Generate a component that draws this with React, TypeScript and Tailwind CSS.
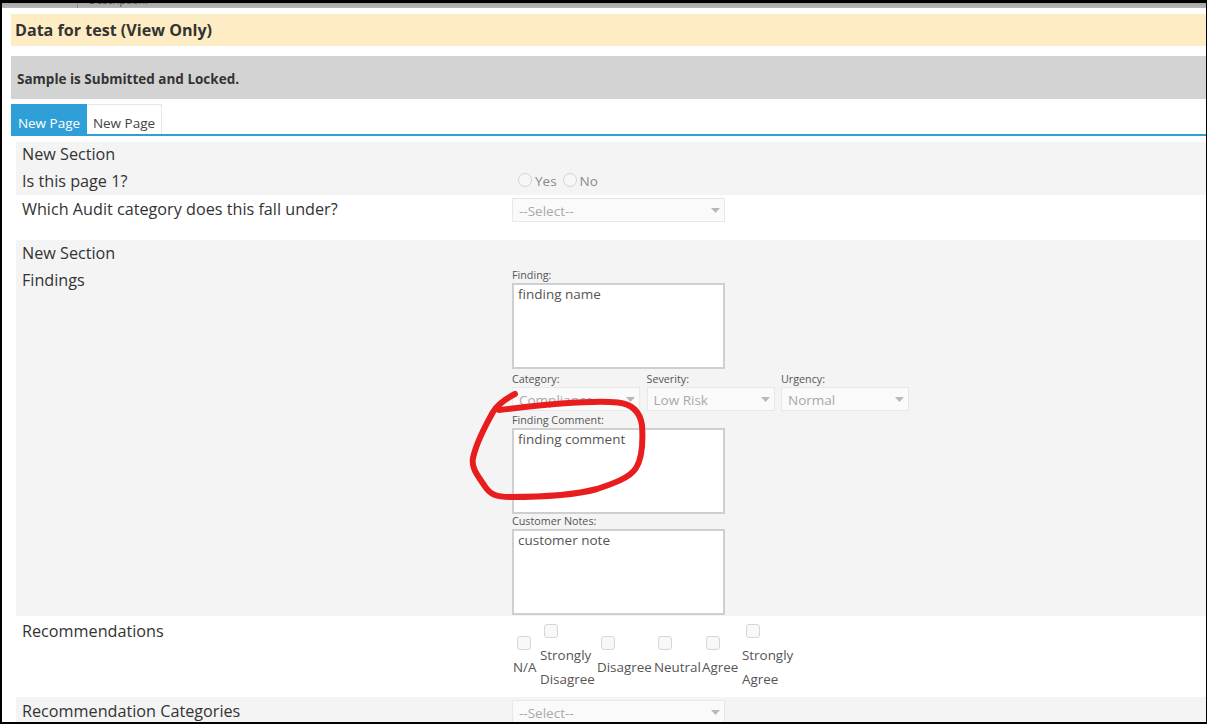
const font = "font-['Open_Sans','Noto_Sans',sans-serif]";

const Caret = () => (
  <svg width="9" height="5" viewBox="0 0 9 5" className="shrink-0">
    <path d="M0 0h9L4.5 5z" fill="#b8b8b8" />
  </svg>
);

const Select = ({ value, className }: { value: string; className: string }) => (
  <div className={`flex h-[24px] items-center justify-between border border-[#e8e8e8] bg-[#fafafa] pl-[6px] pr-[4px] text-[13.5px] text-[#a9a9a9] ${className}`}>
    <span className="pt-[2px]">{value}</span>
    <Caret />
  </div>
);

const Note = ({ label, value }: { label: string; value: string }) => (
  <div className="flex w-[212.5px] flex-col">
    <label className="h-[14px] text-[10.75px] leading-[12px] text-[#555]">{label}</label>
    <textarea
      readOnly
      defaultValue={value}
      className="h-[86px] w-[212.5px] resize-none overflow-hidden border-2 border-[#cfcfcf] bg-white px-[4px] text-[13.5px] leading-[18px] text-[#555] outline-none"
    />
  </div>
);

const Radio = ({ label }: { label: string }) => (
  <span className="flex items-center">
    <span className="h-[14px] w-[14px] rounded-full border border-[#d4d4d4] bg-[#f7f7f7]" />
    <span className="ml-[3px] mt-[2px] text-[13.5px] text-[#8a8a8a]">{label}</span>
  </span>
);

const Check = ({ lines, w }: { lines: string[]; w: string }) => (
  <div className={`flex flex-col ${w}`}>
    <span className="ml-1 h-[14px] w-[14px] rounded-[3px] border border-[#d6d6d6] bg-[#f8f8f8]" />
    <div className="mt-[5px] text-[13.4px] leading-[24px] whitespace-nowrap text-[#555]">
      {lines.map((l) => (
        <div key={l}>{l}</div>
      ))}
    </div>
  </div>
);

const Label = ({ children, h }: { children: string; h: string }) => (
  <div className={`text-[16.2px] text-[#333] ${h}`}>{children}</div>
);

export default function App() {
  return (
    <div className={`relative h-[724px] w-[1207px] overflow-hidden bg-black pt-[3px] pb-[2px] pl-[2px] pr-px ${font}`}>
      <div className="flex h-full flex-col bg-white">
        {/* window behind, almost scrolled off */}
        <div className="relative h-[5px] shrink-0 overflow-hidden bg-gradient-to-b from-[#a4a4a4] to-[#b8b8b8]">
          <div className="absolute top-0 bottom-0 left-[75px] w-px bg-[#8f8f8f]" />
          <span className="absolute top-[-10px] left-[87px] text-[10.5px] text-[#555]">Description:</span>
        </div>

        <div className="ml-[9px] mt-[6px] flex h-[32px] shrink-0 items-center bg-[#feecc4] pl-[4px] text-[16.1px] font-bold text-[#333]">
          Data for test (View Only)
        </div>
        <div className="ml-[9px] mt-[10px] flex h-[43px] shrink-0 items-center bg-[#d3d3d3] pl-[6px] pt-[3px] text-[13.5px] font-bold text-[#333]">
          Sample is Submitted and Locked.
        </div>

        <div className="ml-[9px] mt-[5px] flex h-[32px] shrink-0 border-b-2 border-[#2f9fd8] text-[13.5px]">
          <div className="flex w-[76px] items-center justify-center bg-[#2f9fd8] pt-[8px] text-white">New Page</div>
          <div className="flex w-[75px] items-center justify-center border-t border-r border-[#e6e6e6] pt-[8px] text-[#444]">New Page</div>
        </div>

        <div className="ml-[14px] mt-[6px] h-[53px] shrink-0 bg-[#f4f4f4] pl-[6px]">
          <Label h="leading-[24px]">New Section</Label>
          <div className="flex h-[29px]">
            <div className="w-[490px]">
              <Label h="leading-[31px]">Is this page 1?</Label>
            </div>
            <div className="flex gap-[6px] pb-px pl-[6px]">
              <Radio label="Yes" />
              <Radio label="No" />
            </div>
          </div>
        </div>

        <div className="ml-[14px] flex h-[45px] shrink-0 pl-[6px]">
          <div className="w-[490px] pt-px">
            <Label h="leading-[26px]">Which Audit category does this fall under?</Label>
          </div>
          <Select value="--Select--" className="mt-[3px] w-[212.5px]" />
        </div>

        <div className="ml-[14px] h-[376px] shrink-0 bg-[#f4f4f4] pl-[6px]">
          <Label h="leading-[26px]">New Section</Label>
          <div className="flex">
            <div className="w-[490px]">
              <Label h="leading-[28px]">Findings</Label>
            </div>
            <div className="flex flex-col pt-[3px]">
              <Note label="Finding:" value="finding name" />
              <div className="mt-[4px] flex gap-[6.5px]">
                {[
                  ["Category:", "Compliance"],
                  ["Severity:", "Low Risk"],
                  ["Urgency:", "Normal"],
                ].map(([label, value]) => (
                  <div key={label} className="flex w-[128px] flex-col">
                    <span className="h-[14px] text-[10.75px] leading-[12px] text-[#555]">{label}</span>
                    <Select value={value} className="w-[128px]" />
                  </div>
                ))}
              </div>
              <div className="mt-[3px] flex flex-col gap-px">
                <Note label="Finding Comment:" value="finding comment" />
                <Note label="Customer Notes:" value="customer note" />
              </div>
            </div>
          </div>
        </div>

        <div className="ml-[14px] flex h-[81px] shrink-0 pl-[6px]">
          <div className="w-[491px] pt-[2px]">
            <Label h="leading-[26px]">Recommendations</Label>
          </div>
          <div className="flex items-center gap-[2px] pt-[2px]">
            <Check lines={["N/A"]} w="w-[25px]" />
            <Check lines={["Strongly", "Disagree"]} w="w-[55px]" />
            <Check lines={["Disagree"]} w="w-[55px]" />
            <Check lines={["Neutral"]} w="w-[46px]" />
            <Check lines={["Agree"]} w="w-[38px]" />
            <Check lines={["Strongly", "Agree"]} w="w-[52px]" />
          </div>
        </div>

        <div className="ml-[14px] flex min-h-0 flex-1 overflow-hidden bg-[#f4f4f4] pl-[6px]">
          <div className="w-[490px] pt-px">
            <Label h="leading-[26px]">Recommendation Categories</Label>
          </div>
          <Select value="--Select--" className="mt-[3px] w-[212.5px] shrink-0" />
        </div>
      </div>

      {/* red marker scribble over the finding comment */}
      <svg className="pointer-events-none absolute top-0 left-0" width="1207" height="724" viewBox="0 0 1207 724" fill="none">
        <path
          d="M515 394 C505 399 498 404 493 412 C484 428 476 444 473 458 C471 468 478 476 484 485 C490 495 497 497 510 497 C540 497 575 495 597 489 C612 484 630 478 636 468 C643 457 643 440 642 425 C640 412 632 404 618 402.5 C590 400 540 405 499 410"
          stroke="#e81e1e"
          strokeWidth="6"
          strokeLinecap="round"
          strokeLinejoin="round"
        />
      </svg>
    </div>
  );
}
